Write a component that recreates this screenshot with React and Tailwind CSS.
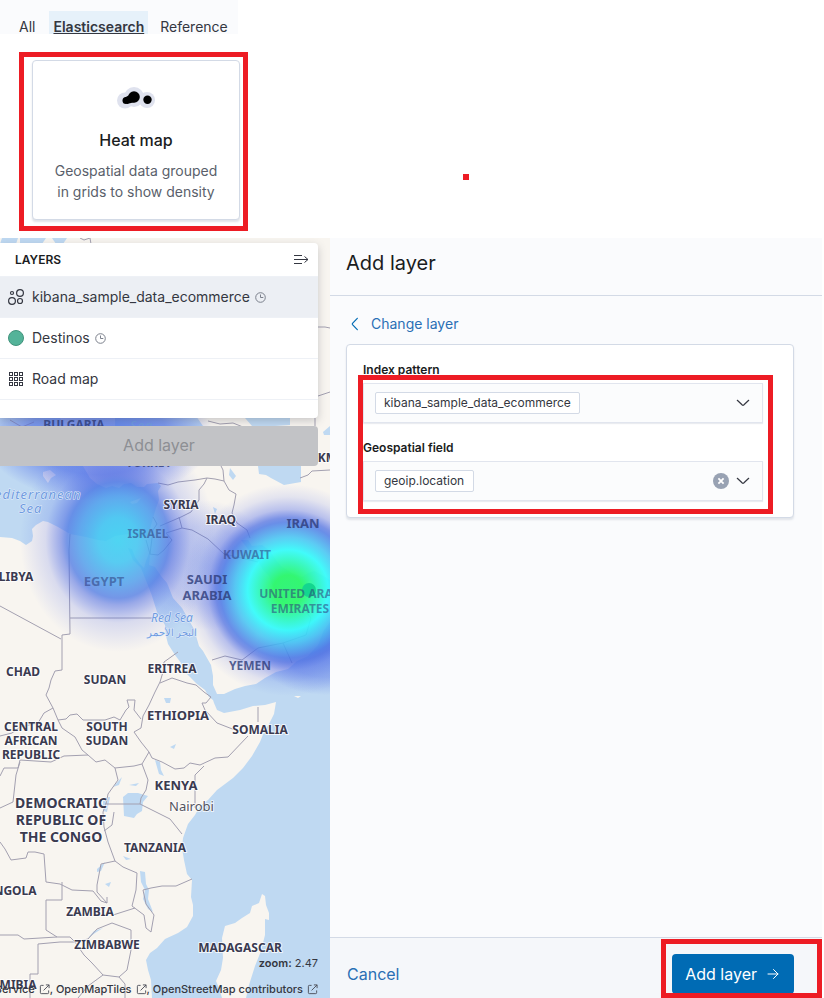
import React from "react";

const SEA = [
  "M0 418 H60 L70 440 L83 466 L90 478 L97 484 L106 488 L112 486 L119 488 L124 484 L131 483 L137 487 L144 487 L147 484 L158 483 L161 486 L158 491 L159 500 L156 508 L153 518 L150 529 L147 537 L141 538 L133 537 L128 534 L121 535 L115 536 L106 541 L98 540 L86 537 L70 534 L58 527 L48 522 L43 521 L36 525 L32 529 L33 536 L32 541 L26 545 L20 541 L12 538 L0 537 Z",
  "M128 548 L132 549 L135 557 L140 564 L144 568 L146 561 L149 553 L150 556 L149 565 L155 567 L161 576 L167 583 L173 598 L182 608 L186 615 L194 629 L199 646 L203 651 L207 658 L211 665 L213 676 L213 685 L217 694 L224 694 L235 689 L245 686 L256 684 L265 678 L276 672 L288 669 L297 661 L308 656 L318 645 L324 630 L330 622 V998 H152 L151 980 L148 970 L146 960 L150 953 L157 948 L165 939 L178 933 L187 927 L193 916 L193 905 L191 897 L192 880 L187 874 L184 860 L182 848 L183 838 L188 824 L195 815 L200 806 L208 800 L217 790 L233 778 L243 768 L252 756 L260 742 L264 732 L269 724 L274 714 L276 702 L265 705 L253 706 L240 710 L224 713 L217 710 L214 703 L213 700 L209 697 L205 690 L197 684 L190 677 L184 671 L181 663 L175 655 L168 644 L166 636 L165 625 L157 612 L152 596 L149 588 L141 568 L133 560 Z",
  "M241 540 L248 540 L252 546 L262 545 L270 551 L276 560 L282 567 L292 573 L302 577 L308 573 L314 571 L322 575 L330 580 V592 L318 588 L309 580 L303 592 L290 597 L283 602 L277 595 L272 585 L269 576 L263 570 L258 561 L251 553 L247 548 Z",
  "M258 466 H301 V482 L284 485 L271 478 L266 475 L259 474 Z",
  "M245 418 H290 V425 L275 426 H252 Z",
  "M115 416 H196 L203 426 H115 Z",
  "M2 238 H18 L16 244 H0 Z",
  "M20 238 H46 L42 244 H20 Z",
  "M52 238 H67 L63 244 H56 Z",
  "M323 432 L330 426 V435 L324 435 Z",
  "M123 797 L128 793 L138 793 L148 796 L143 802 L142 811 L137 814 L134 818 L124 816 Z",
  "M155 760 L160 762 L161 770 L164 776 L159 774 Z",
  "M140 871 L145 872 L146 884 L149 890 L148 899 L153 912 L148 909 L143 899 L145 890 L141 882 Z",
  "M97 869 L105 862 L101 871 L97 872 Z",
  "M105 884 L111 882 L109 887 Z",
  "M88 938 L94 931 L103 928 L95 933 Z",
  "M164 698 h7 l-1 5 h-4 Z",
  "M170 747 l6 -3 l-2 5 Z",
  "M113 787 l9 -10 l-3 8 Z",
  "M129 785 l10 -2 l-3 3 Z",
  "M103 798 l7 -1 l-3 15 l-4 -1 Z",
  "M123 856 l8 3 l-5 1 Z",
  "M213 507 l4 2 l-2 5 Z",
  "M230 468 l6 8 l-3 4 l-4 -5 Z",
];

const ISLANDS = [
  "M262 894 L265 896 L266 905 L269 913 L269 920 L265 919 L265 935 L261 951 L255 966 L249 985 L246 998 H222 L219 988 L216 981 L221 970 L223 958 L222 938 L225 926 L235 923 L242 918 L250 913 L252 906 L259 903 Z",
  "M43 472 L50 470 L56 475 L51 478 L48 483 L43 476 Z",
  "M130 502 L141 498 L137 503 L132 504 Z",
  "M294 696 h7 l-3 2 Z",
];

const BORDERS = [
  "M158 483 L168 485 L178 482 L195 480 L207 478 L215 479 L224 481 L223 470 L221 466",
  "M207 478 L204 484 L199 490 L199 500 L191 512 L181 517 L160 526",
  "M224 481 L229 490 L236 494 L234 505 L232 513 L237 523 L247 530 L250 538",
  "M179 517 L182 528 L166 533 L172 540 L164 550 L158 555 L149 554",
  "M182 528 L192 530 L208 539 L224 554 L242 558 L258 562",
  "M153 517 L157 524 L153 530 L150 554 L146 540",
  "M70 534 L69 550 L70 634 L62 635 V670 L55 671 L51 680 L49 688 L46 695 L53 708 L58 720 L66 719 L70 715 L77 714 L83 720 L105 720 L114 717 L120 720 L126 710 L129 707 L127 700 H135 L134 710 L141 719",
  "M70 618 H155",
  "M0 606 L61 639",
  "M178 652 L164 662 L163 672 L160 682 L155 692 L149 705 L143 716 L141 728 L134 732 L141 742 L149 752 L152 758 L162 762 L175 769 L184 768 L190 763 L200 765 L215 758 L228 757 L248 736",
  "M160 683 L172 678 L187 683 L196 685 L204 692 L211 697 L206 703 L202 703 L205 710 L217 723 L235 730",
  "M258 707 V722",
  "M53 708 L44 713 L38 723 L20 727 L12 733 L0 736",
  "M58 720 L62 728 L75 737 L82 750 L88 755 L96 762 L105 760 L115 768 L134 766 L142 764 L149 752",
  "M88 755 L64 756 L51 762 L20 760 L18 768 L4 768 L0 776",
  "M20 762 L16 775 L13 802 L0 808",
  "M115 768 L118 780 L108 794 L106 804 L103 812 L104 827 L108 842 L115 861 L101 864 L97 885 L97 892 L107 903 V897",
  "M142 764 L148 780 L146 790 L141 798 L140 804 L170 819 L182 834",
  "M204 766 L195 775 V808",
  "M105 804 H140",
  "M104 831 L112 825 L114 812",
  "M115 861 L123 867 L137 873 L136 890 L132 906 L144 915 L146 928 L151 932 L154 915 L146 904 L143 890 L151 888 L162 886 L176 886 L192 879",
  "M0 842 L5 849 L11 860 L26 858 L28 852 L35 852 L44 854 L46 882 L60 884 L72 890 L93 891 L101 901 L107 903",
  "M62 882 V900 H46 V930 L57 937 L70 937 L75 942 L88 939 L97 929 L112 923 L131 930 V950 L127 970 L119 977 L103 975 L92 963 L84 955 L75 942 L60 942 L38 944 V974 H30 V998",
  "M0 935 H18 L24 939 L57 937",
  "M113 915 L135 908",
  "M119 977 L125 984 V998",
  "M103 975 L88 986 L78 998",
  "M212 660 L225 656 L242 660 L258 648 L283 643 L306 635 L311 618 L302 607",
  "M283 643 L292 663",
  "M300 478 L308 475 L312 471 L330 470",
  "M318 327 L325 327 L330 328",
  "M318 396 L330 392",
  "M10 420 L22 427 L34 422",
  "M208 421 L220 424 L233 423 L243 427",
  "M315 418 V426",
  "M80 238 L84 240 L90 238 L91 244",
];

const LABELS = [
  { x: 74, y: 429, size: 12, lines: ["BULGARIA"], soft: true },
  { x: 149, y: 467, size: 12, lines: ["TURKEY"], soft: true },
  { x: 181, y: 509, size: 12, lines: ["SYRIA"] },
  { x: 221, y: 524, size: 12, lines: ["IRAQ"] },
  { x: 303, y: 528, size: 13, lines: ["IRAN"], soft: true },
  { x: 148, y: 538, size: 12, lines: ["ISRAEL"], faint: true },
  { x: 247, y: 559, size: 12, lines: ["KUWAIT"], faint: true },
  { x: 104, y: 586, size: 13, lines: ["EGYPT"], faint: true },
  { x: 207, y: 584, size: 13, lines: ["SAUDI", "ARABIA"], step: 16, soft: true },
  { x: 300, y: 598, size: 12, lines: ["UNITED ARAB", "EMIRATES"], step: 15, faint: true },
  { x: 16, y: 581, size: 12, lines: ["LIBYA"] },
  { x: 23, y: 676, size: 12, lines: ["CHAD"] },
  { x: 105, y: 684, size: 12, lines: ["SUDAN"] },
  { x: 172, y: 673, size: 12, lines: ["ERITREA"] },
  { x: 250, y: 670, size: 12, lines: ["YEMEN"], soft: true },
  { x: 178, y: 720, size: 13, lines: ["ETHIOPIA"] },
  { x: 260, y: 734, size: 12, lines: ["SOMALIA"] },
  { x: 31, y: 731, size: 12, lines: ["CENTRAL", "AFRICAN", "REPUBLIC"], step: 14 },
  { x: 107, y: 731, size: 12, lines: ["SOUTH", "SUDAN"], step: 14 },
  { x: 176, y: 790, size: 13, lines: ["KENYA"] },
  { x: 61, y: 808, size: 14, lines: ["DEMOCRATIC", "REPUBLIC OF", "THE CONGO"], step: 17 },
  { x: 155, y: 852, size: 12, lines: ["TANZANIA"] },
  { x: 11, y: 895, size: 12, lines: ["ANGOLA"] },
  { x: 90, y: 916, size: 12, lines: ["ZAMBIA"] },
  { x: 107, y: 949, size: 12, lines: ["ZIMBABWE"] },
  { x: 240, y: 952, size: 12, lines: ["MADAGASCAR"] },
  { x: 9, y: 989, size: 12, lines: ["NAMIBIA"] },
  { x: 324, y: 462, size: 12, lines: ["TKM"] },
];

function MapLabel({ x, y, size, lines, step = 0, soft, faint }) {
  const overHeat = soft || faint;
  return (
    <text
      textAnchor="middle"
      fontSize={size}
      fontWeight="700"
      fill={overHeat ? "#2c3a78" : "#3a3a50"}
      fillOpacity={faint ? 0.55 : soft ? 0.8 : 1}
      stroke="#ffffff"
      strokeOpacity={overHeat ? 0 : 0.75}
      strokeWidth="2"
      strokeLinejoin="round"
      paintOrder="stroke"
    >
      {lines.map((line, i) => (
        <tspan key={line} x={x} y={y + i * step}>
          {line}
        </tspan>
      ))}
    </text>
  );
}

function MapCanvas() {
  return (
    <svg
      viewBox="0 238 330 760"
      preserveAspectRatio="xMinYMin slice"
      className="absolute inset-0 h-full w-full font-['Noto_Sans',sans-serif]"
      role="img"
      aria-label="Map"
    >
      <defs>
        <radialGradient id="hot">
          <stop offset="0" stopColor="#2cf574" stopOpacity="0.95" />
          <stop offset="0.14" stopColor="#2cf86a" stopOpacity="0.95" />
          <stop offset="0.26" stopColor="#2cf8b4" stopOpacity="0.93" />
          <stop offset="0.38" stopColor="#32fbfb" stopOpacity="0.92" />
          <stop offset="0.5" stopColor="#41c4f4" stopOpacity="0.85" />
          <stop offset="0.64" stopColor="#4a78e6" stopOpacity="0.82" />
          <stop offset="0.68" stopColor="#4a6ce2" stopOpacity="0.72" />
          <stop offset="0.76" stopColor="#4a64e6" stopOpacity="0.36" />
          <stop offset="0.88" stopColor="#4a64e6" stopOpacity="0.12" />
          <stop offset="1" stopColor="#4a64e6" stopOpacity="0" />
        </radialGradient>
        <radialGradient id="warm">
          <stop offset="0" stopColor="#40d2f2" stopOpacity="0.92" />
          <stop offset="0.2" stopColor="#42c6f2" stopOpacity="0.88" />
          <stop offset="0.4" stopColor="#4c9cec" stopOpacity="0.82" />
          <stop offset="0.52" stopColor="#4b78e4" stopOpacity="0.76" />
          <stop offset="0.58" stopColor="#4b6ae2" stopOpacity="0.55" />
          <stop offset="0.74" stopColor="#4a64e6" stopOpacity="0.18" />
          <stop offset="1" stopColor="#4a64e6" stopOpacity="0" />
        </radialGradient>
        <radialGradient id="cool">
          <stop offset="0" stopColor="#4a74e6" stopOpacity="0.85" />
          <stop offset="0.6" stopColor="#4a6ae6" stopOpacity="0.6" />
          <stop offset="1" stopColor="#4a64e6" stopOpacity="0" />
        </radialGradient>
      </defs>
      <rect x="0" y="238" width="330" height="760" fill="#f8f5f0" />
      {SEA.map((d) => (
        <path key={d} d={d} fill="#bfd9f2" />
      ))}
      {ISLANDS.map((d) => (
        <path key={d} d={d} fill="#f8f5f0" />
      ))}
      {BORDERS.map((d) => (
        <path key={d} d={d} fill="none" stroke="#a3a0b0" strokeLinejoin="round" />
      ))}
      <ellipse cx="98" cy="435" rx="115" ry="66" fill="url(#cool)" />
      <circle cx="205" cy="565" r="65" fill="url(#cool)" opacity="0.35" />
      <ellipse cx="325" cy="650" rx="70" ry="45" fill="url(#cool)" opacity="0.6" />
      <ellipse cx="118" cy="540" rx="98" ry="112" fill="url(#warm)" />
      <circle cx="288" cy="590" r="106" fill="url(#hot)" />
      <circle cx="309" cy="590" r="7" fill="#13d68f" />
      {LABELS.map((label) => (
        <MapLabel key={label.lines[0] + label.y} {...label} />
      ))}
      <g fontSize="13" fontStyle="italic" fill="#6f9be0" stroke="#e4edfb" strokeWidth="1" paintOrder="stroke">
        <text x="-17" y="499" letterSpacing="1">Mediterranean</text>
        <text x="19" y="513" letterSpacing="1">Sea</text>
        <text x="130" y="430" letterSpacing="1" strokeWidth="0">Sea</text>
        <text x="172" y="622" fontSize="12" textAnchor="middle">Red Sea</text>
        <text x="172" y="636" fontSize="10" fontStyle="normal" textAnchor="middle">البحر الأحمر</text>
      </g>
      <text x="169" y="811" fontSize="13" fill="#55555f" stroke="#ffffff" strokeOpacity="0.7" strokeWidth="2" paintOrder="stroke">
        Nairobi
      </text>
    </svg>
  );
}

function ClockIcon() {
  return (
    <svg viewBox="0 0 11 11" className="h-[11px] w-[11px] shrink-0" fill="none" stroke="#7b808c" aria-hidden="true">
      <circle cx="5.5" cy="5.5" r="4.8" />
      <path d="M5.5 2.5 V5.5 H8.3" />
    </svg>
  );
}

function ClusterIcon() {
  return (
    <svg viewBox="0 0 16 16" className="h-4 w-4" fill="none" stroke="#343741" strokeWidth="1.2" aria-hidden="true">
      <circle cx="4" cy="4" r="1.5" />
      <circle cx="12" cy="4" r="3.4" />
      <circle cx="4" cy="12" r="3.4" />
      <circle cx="12" cy="12" r="2.5" />
    </svg>
  );
}

function DotIcon() {
  return (
    <svg viewBox="0 0 16 16" className="h-4 w-4" aria-hidden="true">
      <circle cx="8" cy="8" r="7.5" fill="#54b399" stroke="#41937c" />
    </svg>
  );
}

function GridIcon() {
  return (
    <svg viewBox="0 0 16 16" className="h-4 w-4" fill="none" stroke="#343741" aria-hidden="true">
      {[1.5, 6.5, 11.5].map((y) =>
        [1.5, 6.5, 11.5].map((x) => <rect key={`${x}-${y}`} x={x} y={y} width="3" height="3" />)
      )}
    </svg>
  );
}

function ExternalIcon() {
  return (
    <svg viewBox="0 0 12 12" className="ml-1 inline-block h-[11px] w-[11px] align-[-2px]" fill="none" stroke="#4a4d57" aria-hidden="true">
      <path d="M5 1.5 H2.5 Q1.5 1.5 1.5 2.5 V9.5 Q1.5 10.5 2.5 10.5 H9.5 Q10.5 10.5 10.5 9.5 V7" />
      <path d="M7.5 1 H11 V4.5 M11 1 L5 7" />
    </svg>
  );
}

function ChevronIcon() {
  return (
    <svg viewBox="0 0 16 16" className="h-4 w-4" fill="none" stroke="#343741" strokeWidth="1.2" strokeLinecap="round" aria-hidden="true">
      <path d="M2.3 5.3 L7.3 10 Q8 10.6 8.7 10 L13.7 5.3" />
    </svg>
  );
}

const LAYERS = [
  { name: "kibana_sample_data_ecommerce", Icon: ClusterIcon, timed: true, active: true },
  { name: "Destinos", Icon: DotIcon, timed: true },
  { name: "Road map", Icon: GridIcon },
];

function LayerPanel() {
  return (
    <div className="relative mt-[5px] mr-3">
      <section className="rounded-r bg-white pb-[18px] shadow-[0_3px_8px_rgba(60,65,80,0.25)]">
        <header className="flex h-[33px] items-center justify-between pr-[9px] pl-[15px]">
          <h2 className="text-xs font-semibold text-[#1a1c21]">LAYERS</h2>
          <button type="button" aria-label="Collapse layers panel">
            <svg viewBox="0 0 16 16" className="h-4 w-4" fill="none" stroke="#343741" aria-hidden="true">
              <path d="M1 3.5 H9 M1 7.5 H15 M1 11.5 H9 M11.5 4.5 L15 7.5 L11.5 10.5" />
            </svg>
          </button>
        </header>
        <ul className="border-t border-[#eef1f6]">
          {LAYERS.map(({ name, Icon, timed, active }) => (
            <li key={name} className={active ? "border-b border-[#eef1f6] bg-[#eceff4]" : "border-b border-[#eef1f6]"}>
              <button type="button" className="flex h-10 w-full items-center pl-2 text-sm text-[#343741]">
                <Icon />
                <span className="mr-[5px] ml-2">{name}</span>
                {timed && <ClockIcon />}
              </button>
            </li>
          ))}
        </ul>
      </section>
      <button type="button" disabled className="mt-2 h-10 w-full rounded-r bg-[#c2c3c6] pb-[2px] text-base text-[#8d8f94]">
        Add layer
      </button>
    </div>
  );
}

function MapPane() {
  return (
    <section className="relative flex flex-col justify-between overflow-hidden">
      <MapCanvas />
      <LayerPanel />
      <footer className="relative flex flex-col items-end gap-[10px] pr-3 pb-px text-[11px] leading-4 text-[#343741]">
        <p>
          <b className="font-semibold">zoom:</b> 2.47
        </p>
        <p className="font-medium whitespace-nowrap">
          <a href="#service">Service<ExternalIcon /></a>, <a href="#openmaptiles">OpenMapTiles<ExternalIcon /></a>,{" "}
          <a href="#openstreetmap">OpenStreetMap contributors<ExternalIcon /></a>
        </p>
      </footer>
    </section>
  );
}

function ComboBox({ id, label, value, clearable }) {
  return (
    <div>
      <label htmlFor={id} className="block text-xs leading-[18px] font-semibold text-[#1a1c21]">
        {label}
      </label>
      <div className="mt-1 flex h-10 max-w-[400px] items-center border border-[#e1e5ee] bg-[#fbfcfd] pr-[11px] pl-[11px] shadow-[0_1px_1px_rgba(152,162,179,0.2)]">
        <select id={id} className="h-[22px] appearance-none rounded-xs border border-[#d3dae6] bg-white px-2 text-xs text-[#343741]">
          <option>{value}</option>
        </select>
        <div className="ml-auto flex items-center gap-[6px]">
          {clearable && (
            <button type="button" aria-label={`Clear ${label}`}>
              <svg viewBox="0 0 16 16" className="h-4 w-4" aria-hidden="true">
                <circle cx="8" cy="8" r="8" fill="#98a2b3" />
                <path d="M5.4 5.4 L10.6 10.6 M10.6 5.4 L5.4 10.6" stroke="#ffffff" strokeWidth="1.8" />
              </svg>
            </button>
          )}
          <ChevronIcon />
        </div>
      </div>
    </div>
  );
}

function AddLayerFlyout() {
  return (
    <section className="mr-[2px] flex flex-col bg-[#fafbfd]">
      <header className="flex h-[58px] items-center border-b border-[#d3dae6] px-4 pb-2">
        <h1 className="text-xl text-[#1a1c21]">Add layer</h1>
      </header>
      <div className="flex-1 pt-[18px] pr-7 pl-4">
        <button type="button" className="flex items-center gap-[9px] text-sm text-[#2a6fb5]">
          <svg viewBox="0 0 16 16" className="h-4 w-4" fill="none" stroke="#006bb4" strokeWidth="1.2" strokeLinecap="round" aria-hidden="true">
            <path d="M11.3 2.3 L6.5 7.4 Q6 8 6.5 8.6 L11.3 13.7" />
          </svg>
          Change layer
        </button>
        <div className="relative mt-[10px] flex flex-col gap-4 rounded border border-[#d3dae6] bg-white p-4 shadow-[0_2px_2px_rgba(152,162,179,0.25)]">
          <ComboBox id="index-pattern" label="Index pattern" value="kibana_sample_data_ecommerce" />
          <ComboBox id="geo-field" label="Geospatial field" value="geoip.location" clearable />
          <div className="pointer-events-none absolute top-[30px] right-5 bottom-[3px] left-[11px] border-5 border-[#ed1c24]" />
        </div>
      </div>
      <footer className="relative flex h-[61px] items-center justify-between border-t border-[#d3dae6] bg-[#f5f7fa] pt-[11px] pr-7 pl-[17px]">
        <button type="button" className="text-base text-[#2a6fb5]">Cancel</button>
        <button type="button" className="flex h-10 items-center gap-2 rounded bg-[#006bb4] px-[13px] text-base text-white">
          Add layer
          <svg viewBox="0 0 16 16" className="h-4 w-4" fill="none" stroke="#ffffff" strokeLinecap="round" aria-hidden="true">
            <path d="M3 8 H13 M8.5 3.5 L13 8 L8.5 12.5" />
          </svg>
        </button>
        <div className="pointer-events-none absolute top-px right-0 bottom-0 w-[161px] border-5 border-[#ed1c24]" />
      </footer>
    </section>
  );
}

function LayerTypePicker() {
  return (
    <section className="relative h-[238px] bg-white">
      <nav className="flex h-[34px] w-[238px] items-end gap-3 overflow-hidden bg-[#fafbfd] pl-[19px] text-sm text-[#343741]">
        <a href="#all" className="pr-[2px] leading-[15px]">All</a>
        <a href="#elasticsearch" className="bg-[#e6f1fa] px-1 pt-2 leading-[15px] font-semibold underline">Elasticsearch</a>
        <a href="#reference" className="leading-[15px]">Reference</a>
      </nav>
      <div className="mt-[18px] ml-[19px] w-[229px] border-5 border-[#ed1c24] pt-[3px] pr-[3px] pb-[6px] pl-2">
        <button type="button" className="flex h-40 w-full flex-col items-center rounded border border-[#d3dae6] bg-white pt-[26px] text-center shadow-[0_2px_2px_rgba(152,162,179,0.3)]">
          <svg viewBox="0 0 38 22" className="h-[22px] w-[38px]" aria-hidden="true">
            <g fill="#dfe2ee">
              <circle cx="8" cy="13.5" r="8" />
              <circle cx="17" cy="10" r="10" />
              <circle cx="30" cy="13" r="8" />
            </g>
            <circle cx="9" cy="13.5" r="3.5" />
            <circle cx="17" cy="10" r="5.8" />
            <circle cx="30.5" cy="12.7" r="4.2" />
            <path d="M8 10.5 L14 7 L18 15 L10 17 Z" />
          </svg>
          <span className="mt-[19px] text-base font-medium text-[#1a1c21]">Heat map</span>
          <span className="mt-2 px-4 text-sm leading-[21px] text-[#5a5f6b]">Geospatial data grouped in grids to show density</span>
        </button>
      </div>
      <div className="absolute top-[174px] left-[463px] h-[6px] w-[6px] bg-[#ed1c24]" />
    </section>
  );
}

export default function App() {
  return (
    <main className="flex min-h-screen flex-col bg-white font-[Inter,sans-serif]">
      <LayerTypePicker />
      <div className="grid flex-1 grid-cols-[330px_minmax(0,1fr)]">
        <MapPane />
        <AddLayerFlyout />
      </div>
    </main>
  );
}
